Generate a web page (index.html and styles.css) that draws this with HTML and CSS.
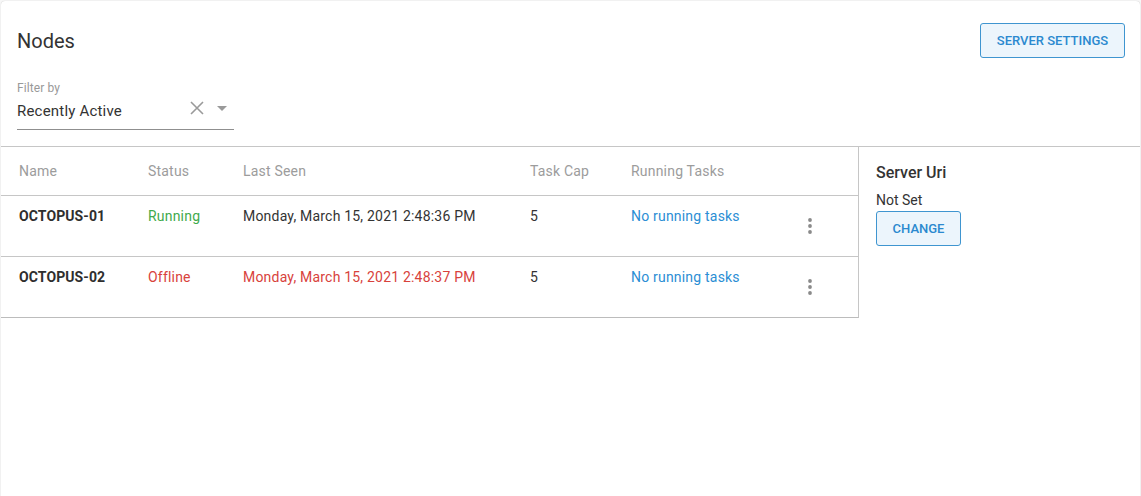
FILE: index.html
```html
<!DOCTYPE html>
<html>
<head>
<meta charset="utf-8">
<link rel="stylesheet" href="styles.css">
</head>
<body>
<div class="card">
  <div class="top">
    <div class="header">
      <h1 class="title">Nodes</h1>
      <button class="btn btn-settings">SERVER SETTINGS</button>
    </div>
    <div class="filter">
      <div class="filter-label">Filter by</div>
      <div class="filter-input">
        <span class="filter-value">Recently Active</span>
        <svg class="icon-clear" width="16" height="16" viewBox="0 0 16 16"><path d="M2 2 L14 14 M14 2 L2 14" stroke="#9a9a9a" stroke-width="1.6" fill="none"/></svg>
        <svg class="icon-caret" width="10" height="5" viewBox="0 0 10 5"><path d="M0 0 L10 0 L5 5 Z" fill="#9a9a9a"/></svg>
      </div>
    </div>
  </div>
  <div class="content">
    <div class="table">
      <div class="row row-head">
        <div class="cell">Name</div>
        <div class="cell">Status</div>
        <div class="cell">Last Seen</div>
        <div class="cell">Task Cap</div>
        <div class="cell">Running Tasks</div>
        <div class="cell"></div>
      </div>
      <div class="row">
        <div class="cell name">OCTOPUS-01</div>
        <div class="cell running">Running</div>
        <div class="cell">Monday, March 15, 2021 2:48:36 PM</div>
        <div class="cell">5</div>
        <div class="cell link">No running tasks</div>
        <div class="cell actions"><svg width="24" height="24" viewBox="0 0 24 24"><circle cx="12" cy="6" r="1.9" fill="#8a8a8a"/><circle cx="12" cy="12" r="1.9" fill="#8a8a8a"/><circle cx="12" cy="18" r="1.9" fill="#8a8a8a"/></svg></div>
      </div>
      <div class="row">
        <div class="cell name">OCTOPUS-02</div>
        <div class="cell offline">Offline</div>
        <div class="cell offline">Monday, March 15, 2021 2:48:37 PM</div>
        <div class="cell">5</div>
        <div class="cell link">No running tasks</div>
        <div class="cell actions"><svg width="24" height="24" viewBox="0 0 24 24"><circle cx="12" cy="6" r="1.9" fill="#8a8a8a"/><circle cx="12" cy="12" r="1.9" fill="#8a8a8a"/><circle cx="12" cy="18" r="1.9" fill="#8a8a8a"/></svg></div>
      </div>
    </div>
    <div class="side">
      <div class="side-title">Server Uri</div>
      <div class="side-value">Not Set</div>
      <button class="btn btn-change">CHANGE</button>
    </div>
  </div>
</div>
</body>
</html>
```
FILE: styles.css
```css
html, body {
  margin: 0;
  padding: 0;
  background: #f7f7f7;
  font-family: Roboto, "Liberation Sans", Arial, sans-serif;
  color: #333;
}
.card {
  margin: 1px 1px 0 1px;
  height: 495px;
  background: #fff;
  border-radius: 4px 4px 0 0;
  box-shadow: 0 0 1px rgba(0,0,0,0.25);
  overflow: hidden;
}
.top {
  padding: 22px 15px 0 16px;
  height: 123px;
  border-bottom: 1px solid #c6c6c6;
}
.header {
  display: flex;
  align-items: center;
  justify-content: space-between;
  height: 35px;
}
.title {
  margin: 0;
  font-size: 20px;
  font-weight: 400;
  color: #333;
}
.btn {
  font-family: Roboto, "Liberation Sans", Arial, sans-serif;
  font-weight: 500;
  font-size: 13px;
  letter-spacing: 0;
  color: #2b89cf;
  background: #ecf5fc;
  border: 1px solid #3f95d0;
  border-radius: 3px;
  padding: 0;
  cursor: pointer;
}
.btn-settings {
  width: 145px;
  height: 35px;
}
.filter {
  margin-top: 23px;
  width: 217px;
}
.filter-label {
  font-size: 12px;
  line-height: 14px;
  color: #999;
  letter-spacing: 0.1px;
}
.filter-input {
  display: flex;
  align-items: center;
  height: 35px;
  border-bottom: 1px solid #8f8f8f;
  box-sizing: border-box;
  padding-bottom: 2px;
}
.filter-value {
  flex: 1;
  font-size: 15px;
  line-height: 20px;
  letter-spacing: 0.2px;
  color: #333;
}
.icon-clear {
  margin-right: 12px;
  margin-top: -6px;
}
.icon-caret {
  margin-right: 7px;
  margin-top: -6px;
}
.content {
  display: flex;
}
.table {
  width: 857px;
  border-right: 1px solid #c6c6c6;
  border-bottom: 1px solid #bcbcbc;
  align-self: flex-start;
}
.row {
  display: grid;
  grid-template-columns: 129px 95px 287px 101px 167px 78px;
  height: 60px;
  border-bottom: 1px solid #c6c6c6;
  font-size: 14px;
  line-height: 20px;
  letter-spacing: 0.2px;
}
.row:last-child {
  border-bottom: none;
}
.row-head {
  height: 48px;
  align-items: center;
  color: #9c9c9c;
}
.row-head .cell {
  padding-top: 0;
}
.cell {
  padding-left: 18px;
  padding-top: 10px;
  white-space: nowrap;
}
.name {
  font-weight: 700;
  color: #2e2e2e;
  letter-spacing: 0.1px;
}
.running { color: #3faa4c; }
.offline { color: #d8423c; }
.link { color: #2b8ed4; }
.actions {
  padding-top: 18px;
}
.actions svg {
  display: block;
}
.side {
  flex: 1;
  padding: 16px 17px;
}
.side-title {
  font-size: 16px;
  font-weight: 500;
  line-height: 20px;
  color: #333;
}
.side-value {
  margin-top: 9px;
  font-size: 14px;
  line-height: 16px;
  color: #333;
}
.btn-change {
  display: block;
  margin-top: 3px;
  width: 85px;
  height: 35px;
}
```
